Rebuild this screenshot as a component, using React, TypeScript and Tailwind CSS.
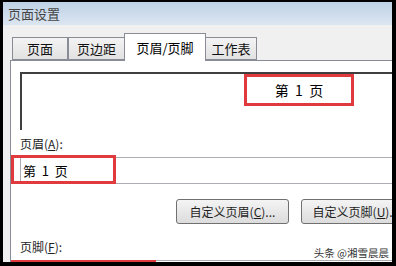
const font = "font-['Noto_Sans_CJK_SC','Liberation_Sans',sans-serif]";

const Tab = ({ label, active, w }: { label: string; active?: boolean; w: string }) => {
    if (active) {
        return (
            <div className={`${w} h-[28px] -mb-px relative z-10 -mx-[1px] bg-white border border-b-0 border-[#898c95] flex items-center justify-center text-[13px] text-black leading-none`}>
                {label}
            </div>
        );
    }
    return (
        <div className={`${w} h-[23px] bg-gradient-to-b from-[#f3f3f3] to-[#e2e2e2] border border-[#898c95] flex items-center justify-center text-[13px] text-[#111] leading-none`}>
            {label}
        </div>
    );
};

const App = () => {
    return (
        <div className={`w-[396px] h-[266px] bg-black pt-[2px] pl-[3px] pr-[4px] pb-[4px] overflow-hidden ${font}`}>
            <div className="relative flex flex-col h-full bg-[#f0f0f0] overflow-hidden">
                {/* title bar */}
                <div className="h-[23px] shrink-0 bg-gradient-to-b from-[#bed1e5] to-[#dce6f1] pl-[5px] pt-[4px] text-[13px] leading-[15px] text-[#444]">
                    页面设置
                </div>

                {/* tabs */}
                <div className="h-[35px] shrink-0 flex items-end pl-[9px]">
                    <Tab label="页面" w="w-[56px]" />
                    <Tab label="页边距" w="w-[57px]" />
                    <Tab label="页眉/页脚" w="w-[82px]" active />
                    <Tab label="工作表" w="w-[52px]" />
                </div>

                {/* panel */}
                <div className="flex-1 ml-[7px] -mr-[4px] bg-white border-t border-l border-[#898c95] pl-[9px] pt-[11px] flex flex-col text-[12px] text-[#1e1e1e]">
                    <div className="h-[58px] shrink-0 -mr-[10px] border-t-2 border-l-2 border-[#3f3f3f]">
                        <div className="ml-[222px] w-[110px] h-[32px] border-[3px] border-[#e0393e] flex items-center justify-center text-[14px] text-black leading-none whitespace-pre">
                            {"第  1  页"}
                        </div>
                    </div>

                    <div className="mt-[6px] h-[16px] leading-[16px]">
                        页眉(<span className="underline">A</span>):
                    </div>

                    <div className="relative mt-[5px] h-[27px] shrink-0 border-t border-b border-l border-[#abadb3] flex items-center pl-[2px] text-[13px] text-black whitespace-pre">
                        {"第  1  页"}
                        <div className="absolute -left-[10px] -top-[3px] w-[105px] h-[29px] border-[3px] border-[#e0393e]" />
                    </div>

                    <div className="mt-[15px] h-[25px] shrink-0 flex gap-[12px] pl-[156px]">
                        <div className="w-[113px] shrink-0 rounded-[3px] border border-[#707070] bg-gradient-to-b from-[#f4f4f4] to-[#dcdcdc] flex items-center justify-center leading-none">
                            自定义页眉(<span className="underline">C</span>)...
                        </div>
                        <div className="w-[110px] shrink-0 rounded-[3px] border border-[#707070] bg-gradient-to-b from-[#f4f4f4] to-[#dcdcdc] flex items-center justify-center leading-none">
                            自定义页脚(<span className="underline">U</span>)...
                        </div>
                    </div>

                    <div className="mt-[15px] h-[16px] leading-[16px]">
                        页脚(<span className="underline">F</span>):
                    </div>

                    <div className="relative mt-[5px] h-[27px] shrink-0 border-t border-l border-[#abadb3]">
                        <div className="absolute -left-[10px] -top-[1px] w-[145px] h-[29px] border-[3px] border-[#e0393e]" />
                    </div>
                </div>

                {/* watermark */}
                <div className="absolute right-[3px] bottom-[3px] text-[10.5px] leading-[13px] text-[#333333]">
                    头条 @湘雪晨晨
                </div>
            </div>
        </div>
    );
};

export default App;
